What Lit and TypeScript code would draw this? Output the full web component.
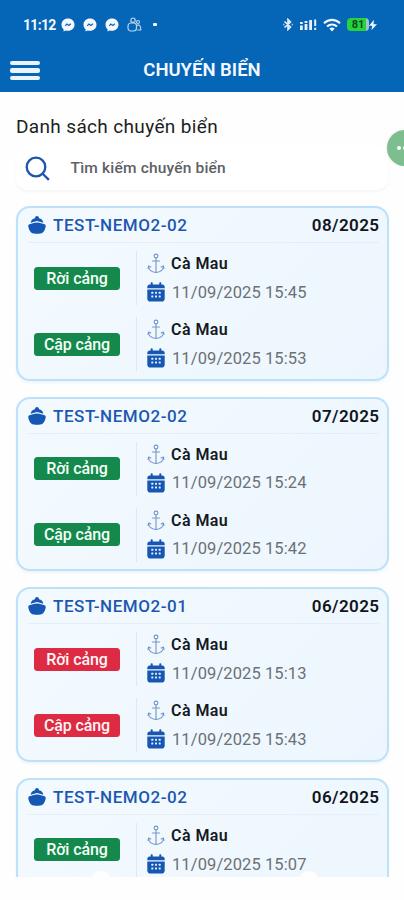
import { LitElement, html, css, svg, nothing } from "lit";
import { customElement, property } from "lit/decorators.js";

interface Trip {
  code: string;
  month: string;
  late?: boolean;
  leave: string;
  arrive?: string;
}

const trips: Trip[] = [
  { code: "TEST-NEMO2-02", month: "08/2025", leave: "11/09/2025 15:45", arrive: "11/09/2025 15:53" },
  { code: "TEST-NEMO2-02", month: "07/2025", leave: "11/09/2025 15:24", arrive: "11/09/2025 15:42" },
  { code: "TEST-NEMO2-01", month: "06/2025", late: true, leave: "11/09/2025 15:13", arrive: "11/09/2025 15:43" },
  { code: "TEST-NEMO2-02", month: "06/2025", leave: "11/09/2025 15:07" },
];

const messenger = html`<svg width="14" height="14" viewBox="0 0 14 14">
  <path fill="#f4f8ff" d="M7 .6C3.2.6.5 3.2.5 6.7c0 1.900.8 3.500 2.100 4.600V13.500l2.100-1.100c.7.2 1.500.3 2.300.3 3.800 0 6.500-2.600 6.500-6S10.800.6 7 .6z"/>
  <path fill="none" stroke="#1263b5" stroke-width="1.200" d="M4.200 7.800l1.700-1.800 2 1.500 2-1.800"/>
</svg>`;

const anchor = html`<svg width="18" height="21" viewBox="0 0 18 21" fill="none" stroke="#7295c9" stroke-width="1.100" stroke-linecap="round" stroke-linejoin="round">
  <circle cx="9" cy="3" r="1.900"/>
  <path d="M9 5v14.500M5.500 8h7M1.500 13.500c.3 3.500 3.500 5.600 7.500 6 4-.4 7.200-2.500 7.500-6M1 15.300l.6-2.300 2.200 1M17 15.300l-.6-2.300-2.200 1"/>
</svg>`;

const dots = [5.3, 9, 12.7].map((x) => [10.8, 14.4].map((y) =>
  svg`<rect x=${x - 1} y=${y - 1} width="2" height="2" rx=".4" fill="#e4effc"/>`));

const calendar = () => html`<svg width="18" height="20" viewBox="0 0 18 20" fill="#1557b3">
  <rect x="3.700" y=".3" width="2" height="4" rx=".8"/>
  <rect x="12.300" y=".3" width="2" height="4" rx=".8"/>
  <path d="M.3 6.300V5c0-1.500 1-2.500 2.500-2.500h12.400c1.500 0 2.500 1 2.500 2.500v1.300z"/>
  <path d="M.3 7.400h17.400v9c0 1.900-1.200 3.100-3.100 3.100H3.400C1.500 19.500.3 18.300.3 16.400z"/>
  ${dots}
</svg>`;

const ship = html`<svg width="18" height="18" viewBox="0 0 18 18" fill="#1557b3">
  <path d="M6.900 2.200C7.200.7 7.900 0 9 0s1.800.7 2.100 2.200c2 .3 3.600 1.500 4.300 4.500L9 5.100 2.600 6.700c.7-3 2.300-4.200 4.300-4.500z"/>
  <path d="M9 6.500c2.900.4 5.500 1 7.500 1.800.9.400 1.300 1 1.200 1.900-.3 2.300-1.300 4.700-2.900 6.200-1.400 1.100-3.600 1.400-5.800 1.400s-4.400-.3-5.800-1.400C1.600 14.900.6 12.500.3 10.200c-.1-.9.300-1.500 1.200-1.900 2-.8 4.600-1.400 7.500-1.800z"/>
</svg>`;

@customElement("trip-card")
class TripCard extends LitElement {
  @property({ attribute: false }) trip!: Trip;

  static styles = css`
    :host {
      display: block;
      box-sizing: border-box;
      flex: none;
      height: 174.600px;
      padding: 0 8px 0 10px;
      border: 2px solid #bbe1fb;
      border-radius: 14px;
      background: linear-gradient(135deg, #f3faff, #edf6fe);
      box-shadow: 0 2px 3px rgba(60, 110, 160, 0.08);
    }
    svg { display: block; flex: none; }
    .head {
      display: flex;
      align-items: center;
      height: 34px;
      border-bottom: 1px solid #e5eef6;
      font-size: 17px;
    }
    .code { margin-left: 7px; color: #1c58b0; flex: 1; font-weight: 500; letter-spacing: 0.550px; }
    .month { color: #10151b; letter-spacing: 0.400px; font-weight: 600; margin-right: -0.400px; }
    .stop { display: flex; align-items: center; height: 54px; margin-top: 8px; }
    .stop + .stop { margin-top: 12px; }
    .side {
      box-sizing: border-box;
      width: 109px;
      height: 54px;
      padding-left: 6px;
      display: flex;
      align-items: center;
      border-right: 1px solid #dfe8ef;
    }
    .badge {
      width: 86px;
      height: 23px;
      border-radius: 3.500px;
      background: #15894d;
      color: #f4fff8;
      font-weight: 500;
      font-size: 16px;
      letter-spacing: -0.100px;
      line-height: 23px;
      text-align: center;
    }
    .late { background: #dc2b42; color: #fff5f7; }
    .info { padding-left: 10px; display: flex; flex-direction: column; gap: 7.500px; }
    .line { display: flex; align-items: center; height: 21px; gap: 7px; white-space: nowrap; }
    .place { color: #15191e; font-weight: 600; font-size: 16px; letter-spacing: 0.450px; margin-left: -1px; }
    .time { color: #6b7176; font-size: 16.500px; letter-spacing: 0.100px; }
  `;

  stop(label: string, time: string) {
    return html`<div class="stop">
      <div class="side"><div class="badge ${this.trip.late ? "late" : ""}">${label}</div></div>
      <div class="info">
        <div class="line">${anchor}<span class="place">Cà Mau</span></div>
        <div class="line">${calendar()}<span class="time">${time}</span></div>
      </div>
    </div>`;
  }

  render() {
    const t = this.trip;
    return html`
      <div class="head">${ship}<span class="code">${t.code}</span><span class="month">${t.month}</span></div>
      ${this.stop("Rời cảng", t.leave)}
      ${t.arrive ? this.stop("Cập cảng", t.arrive) : nothing}
    `;
  }
}

@customElement("app-root")
class AppRoot extends LitElement {
  static styles = css`
    :host {
      display: flex;
      flex-direction: column;
      position: relative;
      height: 900px;
      overflow: hidden;
      background: #fefefe;
      font-family: Roboto, "Liberation Sans", sans-serif;
    }
    svg { display: block; flex: none; }
    header { flex: none; height: 92px; background: #0565b7; color: #f4f8ff; }
    .status { display: flex; align-items: center; height: 49px; padding: 0 27px 0 23px; }
    .clock { font-weight: 700; font-size: 14px; width: 38px; letter-spacing: -0.700px; }
    .notes { display: flex; align-items: center; gap: 8px; flex: 1; }
    .dot { width: 3.500px; height: 3.500px; margin-left: 3px; border-radius: 1px; background: #fff; }
    .system { display: flex; align-items: center; }
    .signal { margin-left: 7px; }
    .wifi { margin-left: 6px; }
    .battery {
      margin-left: 6px;
      width: 22px;
      height: 13px;
      border-radius: 4px;
      background: linear-gradient(90deg, #27d33d 19px, #9dc6cf 19px);
      color: #0b4a20;
      font-size: 11px;
      font-weight: 700;
      line-height: 13.500px;
      text-align: center;
    }
    .bar { display: grid; grid-template-columns: 30px 1fr 30px; align-items: center; height: 43px; padding: 0 10px; }
    .menu { display: flex; flex-direction: column; gap: 3px; }
    .menu i { height: 4.500px; border-radius: 2px; background: #edf3fd; }
    h1 { margin: 0; font-size: 18.500px; font-weight: 600; line-height: 43px; text-align: center; }
    .heading { flex: none; margin: 24px 0 0 16px; height: 22px; line-height: 22px; font-size: 19px; color: #1c1e21; letter-spacing: 0.350px; }
    .search {
      flex: none;
      display: flex;
      align-items: center;
      box-sizing: border-box;
      height: 44px;
      margin: 8px 16px 0;
      padding-left: 9px;
      border-radius: 12px;
      background: #fff;
      box-shadow: 0 2px 3px rgba(0, 0, 0, 0.04);
      color: #5d6165;
      font-size: 15.500px;
      font-weight: 500;
      letter-spacing: 0.180px;
    }
    .search span { margin-left: 20.500px; }
    .list { flex: none; display: flex; flex-direction: column; gap: 16px; height: 671px; margin-top: 16px; padding: 0 15px 0 16px; overflow: hidden; }
    .bubble {
      position: absolute;
      top: 130px;
      left: 387px;
      width: 36px;
      height: 36px;
      border-radius: 50%;
      background: #7cbe8e;
      box-shadow: 0 0 3px rgba(0, 0, 0, 0.12);
    }
    .bubble::before {
      content: "";
      position: absolute;
      left: 10px;
      top: 16px;
      width: 4px;
      height: 4px;
      border-radius: 50%;
      background: #fff;
      box-shadow: 6px 0 #fff, 12px 0 #fff;
    }
    .bump { position: absolute; top: 871px; width: 20px; height: 20px; border-radius: 50%; background: #fefefe; }
    .left { left: 91px; }
    .right { left: 299px; }
  `;

  render() {
    return html`
      <header>
        <div class="status">
          <span class="clock">11:12</span>
          <div class="notes">
            ${messenger}${messenger}${messenger}
            <svg width="15" height="15" viewBox="0 0 15 15" fill="none" stroke="#b9d5ee" stroke-width="1.200">
              <circle cx="6" cy="3.200" r="2.200"/><rect x="1" y="6" width="8.500" height="8" rx="3"/>
              <circle cx="11" cy="5" r="1.500"/><path d="M9.500 8.500c2.500-1.500 4.500.5 4.300 4.500h-3.500"/>
            </svg>
            <i class="dot"></i>
          </div>
          <div class="system">
            <svg width="10" height="13" viewBox="0 0 10 13" fill="none" stroke="#e6f0fc" stroke-width="1.600">
              <path d="M1.500 3.500l6 5.500L5 11.500v-10L7.500 4l-6 5.500M.3 6.500h1M8.700 6.500h1"/>
            </svg>
            <svg class="signal" width="17" height="12" viewBox="0 0 17 12" fill="#e9f1fc">
              <path d="M0 3h2.800v2H0zM0 6.500h2.800V11H0zM4.600 2h2.800v2H4.600zM4.600 5h2.800v6H4.600zM9.200 1H12v10H9.200zM14.200.5h2v6.500h-2zM14.200 8.700h2V11h-2z"/>
            </svg>
            <svg class="wifi" width="18" height="14" viewBox="0 0 18 14" fill="none" stroke="#f2f7ff" stroke-width="2.200">
              <path d="M1 5.200c4.800-4.400 11.200-4.400 16 0M4 8.500c3-2.700 7-2.700 10 0"/>
              <path fill="#f2f7ff" stroke="none" d="M6.300 10.600c1.600-1.400 3.800-1.400 5.400 0L9 13.400z"/>
            </svg>
            <span class="battery">81</span>
            <svg width="8" height="12" viewBox="0 0 8 12" fill="#f3f8ff"><path d="M5 .8L0 6.800h3.300L2.400 11.200 8 5.200H4.500z"/></svg>
          </div>
        </div>
        <div class="bar">
          <div class="menu"><i></i><i></i><i></i></div>
          <h1>CHUYẾN BIỂN</h1>
        </div>
      </header>
      <div class="heading">Danh sách chuyến biển</div>
      <div class="search">
        <svg width="25" height="25" viewBox="0 0 25 25" fill="none" stroke="#1c55ad" stroke-width="2.300">
          <circle cx="11" cy="11" r="9.300"/><path d="M17.700 17.700l6.200 6.200"/>
        </svg>
        <span>Tìm kiếm chuyến biển</span>
      </div>
      <div class="list">${trips.map((t) => html`<trip-card .trip=${t}></trip-card>`)}</div>
      <div class="bump left"></div>
      <div class="bump right"></div>
      <div class="bubble"></div>
    `;
  }
}
